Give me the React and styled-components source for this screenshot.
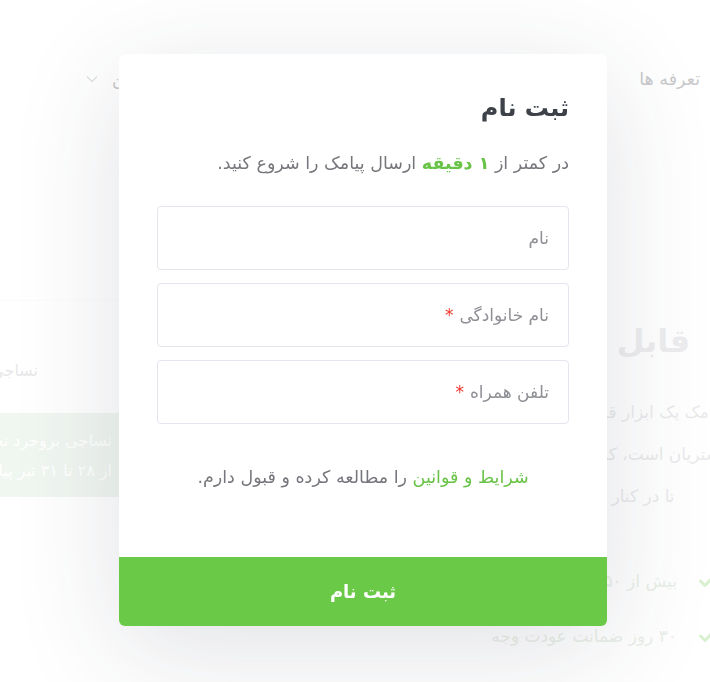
import styled, { createGlobalStyle } from "styled-components";

const GlobalStyle = createGlobalStyle`
  html, body {
    margin: 0;
    padding: 0;
    background: #fff;
    overflow: hidden;
  }
  body {
    font-family: "DejaVu Sans", "Noto Sans", sans-serif;
  }
  * {
    box-sizing: border-box;
  }
`;

/* ---------- background page (under the overlay) ---------- */

const Viewport = styled.div`
  width: 100vw;
  height: 100vh;
  display: flex;
  justify-content: center;
  overflow: hidden;
`;

const Page = styled.div`
  flex: none;
  width: 860px;
  direction: rtl;
`;

const Header = styled.header`
  height: 250px;
  padding: 69px 85px 0 161px;
`;

const Nav = styled.nav`
  display: flex;
  align-items: center;
  gap: 70px;
  font-size: 17.5px;
  color: #76767c;
`;

const NavItem = styled.a`
  display: flex;
  align-items: center;
  gap: 14px;
  margin-right: ${(p) => (p.$end ? "auto" : "0")};
`;

const Main = styled.main`
  display: grid;
  grid-template-columns: 330px 1fr 215px;
  padding-right: 20px;
`;

const Hero = styled.section`
  display: flex;
  flex-direction: column;
  align-items: center;
  text-align: center;
`;

const HeroTitle = styled.h1`
  margin: 67px 0 0;
  font-size: 32px;
  line-height: 48px;
  font-weight: bold;
  color: #d2d2d6;
  white-space: nowrap;

  span {
    color: #d2ebc4;
  }
`;

const HeroText = styled.p`
  margin: 26px 0 0;
  font-size: 17px;
  line-height: 42px;
  color: #cacace;
  white-space: nowrap;
`;

const Features = styled.ul`
  align-self: stretch;
  list-style: none;
  margin: 36px 0 0;
  padding: 0 50px 0 0;
  text-align: right;
`;

const Feature = styled.li`
  display: flex;
  align-items: center;
  gap: 22px;
  height: 55px;
  font-size: 17px;
  color: #c9d6c4;
  white-space: nowrap;
`;

const Side = styled.aside`
  grid-column: 3;
  padding-top: 50px;
`;

const SideCard = styled.div`
  display: grid;
  grid-template-columns: 70px 1fr;
  height: 105px;
  border-top: 1px solid #f6f6f6;
`;

const SideCell = styled.div`
  display: flex;
  align-items: flex-end;
  padding: 0 32px 25px 0;
  font-size: 16px;
  color: #c4c4c8;
  white-space: nowrap;
  border-right: ${(p) => (p.$divider ? "1px solid #f4f4f4" : "none")};
`;

const NewsBox = styled.div`
  margin-top: 8px;
  height: 84px;
  padding: 13px 28px 0 0;
  background: #dae8da;
  color: #ffffff;
  font-size: 16px;
  line-height: 30px;
  white-space: nowrap;
`;

/* ---------- modal ---------- */

const Overlay = styled.div`
  position: fixed;
  inset: 0;
  display: flex;
  align-items: center;
  justify-content: center;
  padding: 0 0 2px 16px;
  background: rgba(255, 255, 255, 0.6);
`;

const Modal = styled.div`
  width: 488px;
  direction: rtl;
  background: #fff;
  border-radius: 6px;
  overflow: hidden;
  box-shadow: 0 24px 110px rgba(40, 50, 70, 0.14);
`;

const Body = styled.div`
  padding: 36px 38px 0;
`;

const Title = styled.h2`
  margin: 0;
  font-size: 24px;
  line-height: 36px;
  font-weight: bold;
  color: #3d4148;
`;

const Lead = styled.p`
  margin: 25px 0 0;
  font-size: 17.5px;
  line-height: 24px;
  color: #76777c;
`;

const Accent = styled.span`
  color: #69c347;
  font-weight: ${(p) => (p.$bold ? "bold" : "normal")};
`;

const Fields = styled.div`
  display: flex;
  flex-direction: column;
  gap: 13px;
  margin-top: 31px;
`;

const Field = styled.label`
  position: relative;
  display: block;
  height: 64px;
`;

const Input = styled.input`
  width: 100%;
  height: 100%;
  padding: 0 20px;
  border: 1px solid #e3e6ec;
  border-radius: 4px;
  background: #fff;
  font: inherit;
  font-size: 17px;
  color: #333;
  outline: none;
`;

const Placeholder = styled.span`
  position: absolute;
  top: 50%;
  right: 20px;
  transform: translateY(-50%);
  font-size: 17px;
  color: #8f9095;
  pointer-events: none;

  b {
    color: #f0362b;
    font-weight: normal;
    margin-right: 6px;
  }
`;

const Terms = styled.p`
  margin: 41px 0 0;
  font-size: 17.5px;
  line-height: 24px;
  text-align: center;
  color: #76777c;
`;

const Submit = styled.button`
  display: block;
  width: 100%;
  height: 69px;
  margin-top: 68px;
  border: none;
  background: #6bc948;
  color: #fff;
  font: inherit;
  font-size: 18px;
  font-weight: bold;
  cursor: pointer;
`;

function Chevron() {
  return (
    <svg width="12" height="8" viewBox="0 0 12 8" fill="none">
      <path d="M1 1.5L6 6.5L11 1.5" stroke="#b4b4b8" strokeWidth="1.4" />
    </svg>
  );
}

function Check() {
  return (
    <svg width="16" height="12" viewBox="0 0 16 12" fill="none">
      <path d="M1.5 6L6 10.5L14.5 1.5" stroke="#a4dc8c" strokeWidth="3" strokeLinecap="round" />
    </svg>
  );
}

const fields = [
  { label: "نام", required: false },
  { label: "نام خانوادگی", required: true },
  { label: "تلفن همراه", required: true },
];

export default function App() {
  return (
    <>
      <GlobalStyle />
      <Viewport>
        <Page>
          <Header>
            <Nav>
              <NavItem>تعرفه ها</NavItem>
              <NavItem>وب سرویس</NavItem>
              <NavItem>درباره ما</NavItem>
              <NavItem $end>
                خدمات من
                <Chevron />
              </NavItem>
            </Nav>
          </Header>
          <Main>
            <Hero>
              <HeroTitle>
                قابل <span>اعتماد</span>
              </HeroTitle>
              <HeroText>
                پیامک یک ابزار قدرتمند برای ارتباط
                <br />
                با مشتریان است، کمپین بسازید و خدمات
                <br />
                تا در کنار شما باشیم.
              </HeroText>
              <Features>
                <Feature>
                  <Check />
                  بیش از ۵۰ هزار کاربر فعال
                </Feature>
                <Feature>
                  <Check />
                  ۳۰ روز ضمانت عودت وجه
                </Feature>
              </Features>
            </Hero>
            <Side>
              <SideCard>
                <SideCell $divider />
                <SideCell>نساجی بروجرد</SideCell>
              </SideCard>
              <NewsBox>
                نساجی بروجرد تخفیف ویژه
                <br />
                از ۲۸ تا ۳۱ تیر پیامک رایگان
              </NewsBox>
            </Side>
          </Main>
        </Page>
      </Viewport>

      <Overlay>
        <Modal>
          <Body>
            <Title>ثبت نام</Title>
            <Lead>
              در کمتر از <Accent $bold>۱ دقیقه</Accent> ارسال پیامک را شروع کنید.
            </Lead>
            <Fields>
              {fields.map((f) => (
                <Field key={f.label}>
                  <Input type="text" />
                  <Placeholder>
                    {f.label}
                    {f.required && <b>*</b>}
                  </Placeholder>
                </Field>
              ))}
            </Fields>
            <Terms>
              <Accent>شرایط و قوانین</Accent> را مطالعه کرده و قبول دارم.
            </Terms>
          </Body>
          <Submit>ثبت نام</Submit>
        </Modal>
      </Overlay>
    </>
  );
}
